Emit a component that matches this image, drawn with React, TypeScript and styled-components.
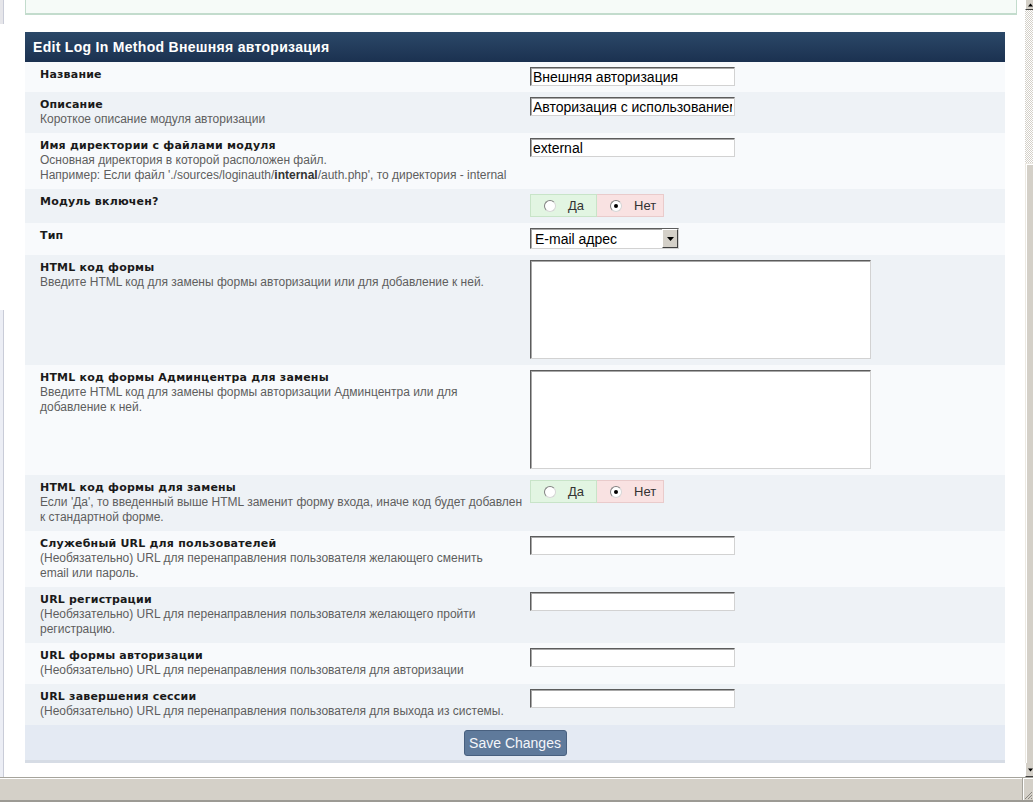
import React from 'react';
import styled, { createGlobalStyle } from 'styled-components';

const GlobalStyle = createGlobalStyle`
  html, body {
    margin: 0;
    padding: 0;
    background: #ffffff;
  }
  body {
    font-family: 'Liberation Sans', Arial, sans-serif;
    overflow: hidden;
  }
`;

const Window = styled.div`
  width: 1033px;
  height: 802px;
  display: flex;
  flex-direction: column;
  overflow: hidden;
`;

const Viewport = styled.div`
  height: 777px;
  display: flex;
`;

// left edge of the side menu that peeks in
const LeftEdge = styled.div`
  width: 4px;
  display: flex;
  flex-direction: column;
`;

const EdgePiece = styled.div<{ $h?: number; $fill?: boolean }>`
  height: ${({ $h }) => ($h ? `${$h}px` : 'auto')};
  flex: ${({ $fill }) => ($fill ? 1 : 'none')};
  background: ${({ $fill }) => ($fill ? '#eceef5' : '#e6e6ea')};
  border-right: 1px solid #c9ccd8;
`;

const EdgeGap = styled.div`
  height: 286px;
`;

const Page = styled.div`
  flex: 1;
  padding: 0 20px 0 21px;
  display: flex;
  flex-direction: column;
`;

const NoticeBox = styled.div`
  height: 13px;
  margin-right: -12px;
  background: #f6fbf8;
  border: 1px solid #c3dccd;
  border-top: none;
  border-bottom: 2px solid #c3dccd;
`;

const Panel = styled.div`
  margin-top: 17px;
  display: flex;
  flex-direction: column;
`;

const Header = styled.div`
  height: 30px;
  padding: 0 8px;
  display: flex;
  align-items: center;
  color: #ffffff;
  font-weight: bold;
  font-size: 14px;
  letter-spacing: 0.3px;
  background: linear-gradient(#2b4868, #1b3150);
`;

const Row = styled.div<{ $alt?: boolean }>`
  display: grid;
  grid-template-columns: 505px 1fr;
  padding: 5px 0 6px;
  background: ${({ $alt }) => ($alt ? '#eef2f6' : '#f8fafc')};
`;

const LabelCell = styled.div`
  padding: 1px 0 0 15px;
`;

const Title = styled.div`
  font-family: 'DejaVu Sans', Verdana, sans-serif;
  font-weight: bold;
  font-size: 11px;
  letter-spacing: 0.2px;
  line-height: 14px;
  color: #1a1a1a;
`;

const Desc = styled.div`
  font-size: 12px;
  line-height: 15px;
  color: #5e5e5e;
  white-space: nowrap;

  b {
    color: #333333;
  }
`;

const FieldCell = styled.div`
  display: flex;
  align-items: flex-start;
`;

const sunken = `
  border-style: solid;
  border-width: 1px;
  border-color: #5c5c5c #d2d2d2 #d2d2d2 #5c5c5c;
  box-shadow: inset 1px 1px 0 #a8a8a8;
`;

const TextInput = styled.input`
  box-sizing: border-box;
  width: 205px;
  height: 19px;
  padding: 0 2px;
  margin: 0;
  ${sunken}
  background: #ffffff;
  font-family: 'Liberation Sans', Arial, sans-serif;
  font-size: 14px;
  color: #000000;
  outline: none;
`;

const TextArea = styled.textarea`
  box-sizing: border-box;
  width: 341px;
  height: 99px;
  margin: 0;
  padding: 2px;
  ${sunken}
  background: #ffffff;
  resize: none;
  outline: none;
`;

const RadioGroup = styled.div`
  display: flex;
  height: 23px;
`;

const RadioCell = styled.label<{ $tone: 'yes' | 'no' }>`
  box-sizing: border-box;
  width: 67px;
  display: flex;
  align-items: center;
  gap: 12px;
  padding-left: 13px;
  font-size: 13px;
  color: #333333;
  background: ${({ $tone }) => ($tone === 'yes' ? '#e2f5e2' : '#f9e2e2')};
  border: 1px solid ${({ $tone }) => ($tone === 'yes' ? '#c8e4c8' : '#e9cbcb')};
  border-left-width: ${({ $tone }) => ($tone === 'yes' ? '1px' : '0')};
`;

const RadioMark = styled.span<{ $on?: boolean }>`
  box-sizing: border-box;
  width: 12px;
  height: 12px;
  border-radius: 50%;
  background: #ffffff;
  border: 1px solid #d6d6d6;
  border-top-color: #808080;
  border-left-color: #808080;
  display: flex;
  align-items: center;
  justify-content: center;

  &::after {
    content: '';
    width: 4px;
    height: 4px;
    border-radius: 50%;
    background: ${({ $on }) => ($on ? '#000000' : 'transparent')};
  }
`;

const SelectBox = styled.div`
  box-sizing: border-box;
  width: 149px;
  height: 21px;
  ${sunken}
  background: #ffffff;
  display: flex;
  align-items: stretch;
`;

const SelectText = styled.div`
  flex: 1;
  padding-left: 4px;
  display: flex;
  align-items: center;
  font-size: 14px;
  color: #000000;
`;

const SelectButton = styled.div`
  box-sizing: border-box;
  width: 16px;
  background: #d4d0c8;
  border: 1px solid;
  border-color: #ffffff #404040 #404040 #ffffff;
  display: flex;
  align-items: center;
  justify-content: center;
`;

const Footer = styled.div`
  height: 35px;
  background: #e4eaf3;
  border-bottom: 3px solid #d6dce5;
  display: flex;
  align-items: center;
  justify-content: center;
`;

const SaveButton = styled.button`
  width: 103px;
  height: 26px;
  padding: 0;
  background: #5f7a9b;
  border: 1px solid #48607f;
  border-radius: 3px;
  color: #f4f6fa;
  font-family: 'Liberation Sans', Arial, sans-serif;
  font-size: 14px;
`;

const Scrollbar = styled.div`
  width: 8px;
  display: flex;
  flex-direction: column;
`;

const ScrollButton = styled.div<{ $h: number }>`
  box-sizing: border-box;
  height: ${({ $h }) => $h}px;
  background: #d4d0c8;
  border-left: 1px solid #ffffff;
  border-bottom: 1px solid #404040;
  display: flex;
  align-items: center;
  justify-content: flex-start;
  padding-left: 2px;
`;

const ScrollTrack = styled.div`
  height: 153px;
  background: repeating-conic-gradient(#d4d0c8 0 25%, #ffffff 0 50%) 0 0 / 2px 2px;
`;

const ScrollThumb = styled.div`
  flex: 1;
  background: #d4d0c8;
  border-left: 1px solid #ece9e2;
  border-top: 1px solid #ece9e2;
  box-shadow: inset 1px 1px 0 #ffffff;
`;

const StatusBar = styled.div`
  height: 25px;
  box-sizing: border-box;
  border-top: 1px solid #a6a49c;
  border-bottom: 2px solid #9c9a94;
  box-shadow: inset 0 1px 0 #ffffff;
  background: #d4d0c8;
  display: flex;
`;

const StatusPane = styled.div`
  flex: 1;
  border-right: 1px solid #a6a49c;
  box-shadow: 1px 0 0 #ffffff;
`;

const Grip = styled.div`
  width: 10px;
  display: flex;
  align-items: flex-end;
`;

const Arrow: React.FC<{ up?: boolean }> = ({ up }) => (
  <svg width="7" height="4" viewBox="0 0 7 4">
    <path d={up ? 'M0 4 L3.5 0 L7 4 Z' : 'M0 0 L7 0 L3.5 4 Z'} fill="#000" />
  </svg>
);

type RowData = {
  title: string;
  desc?: React.ReactNode[];
  field: React.ReactNode;
};

const YesNo: React.FC<{ value: boolean }> = ({ value }) => (
  <RadioGroup>
    <RadioCell $tone="yes">
      <RadioMark $on={value} />
      Да
    </RadioCell>
    <RadioCell $tone="no">
      <RadioMark $on={!value} />
      Нет
    </RadioCell>
  </RadioGroup>
);

const rows: RowData[] = [
  { title: 'Название', field: <TextInput defaultValue="Внешняя авторизация" /> },
  {
    title: 'Описание',
    desc: ['Короткое описание модуля авторизации'],
    field: <TextInput defaultValue="Авторизация с использованием внешней базы" />,
  },
  {
    title: 'Имя директории с файлами модуля',
    desc: [
      'Основная директория в которой расположен файл.',
      <>
        Например: Если файл './sources/loginauth/<b>internal</b>/auth.php', то директория - internal
      </>,
    ],
    field: <TextInput defaultValue="external" />,
  },
  { title: 'Модуль включен?', field: <YesNo value={false} /> },
  {
    title: 'Тип',
    field: (
      <SelectBox>
        <SelectText>E-mail адрес</SelectText>
        <SelectButton>
          <Arrow />
        </SelectButton>
      </SelectBox>
    ),
  },
  {
    title: 'HTML код формы',
    desc: ['Введите HTML код для замены формы авторизации или для добавление к ней.'],
    field: <TextArea />,
  },
  {
    title: 'HTML код формы Админцентра для замены',
    desc: [
      'Введите HTML код для замены формы авторизации Админцентра или для',
      'добавление к ней.',
    ],
    field: <TextArea />,
  },
  {
    title: 'HTML код формы для замены',
    desc: [
      "Если 'Да', то введенный выше HTML заменит форму входа, иначе код будет добавлен",
      'к стандартной форме.',
    ],
    field: <YesNo value={false} />,
  },
  {
    title: 'Служебный URL для пользователей',
    desc: [
      '(Необязательно) URL для перенаправления пользователя желающего сменить',
      'email или пароль.',
    ],
    field: <TextInput />,
  },
  {
    title: 'URL регистрации',
    desc: [
      '(Необязательно) URL для перенаправления пользователя желающего пройти',
      'регистрацию.',
    ],
    field: <TextInput />,
  },
  {
    title: 'URL формы авторизации',
    desc: ['(Необязательно) URL для перенаправления пользователя для авторизации'],
    field: <TextInput />,
  },
  {
    title: 'URL завершения сессии',
    desc: ['(Необязательно) URL для перенаправления пользователя для выхода из системы.'],
    field: <TextInput />,
  },
];

export default function App() {
  return (
    <>
      <GlobalStyle />
      <Window>
        <Viewport>
          <LeftEdge>
            <EdgePiece $h={24} />
            <EdgeGap />
            <EdgePiece $fill />
          </LeftEdge>
          <Page>
            <NoticeBox />
            <Panel>
              <Header>Edit Log In Method Внешняя авторизация</Header>
              {rows.map((row, i) => (
                <Row key={row.title} $alt={i % 2 === 1}>
                  <LabelCell>
                    <Title>{row.title}</Title>
                    {row.desc?.map((line, j) => (
                      <Desc key={j}>{line}</Desc>
                    ))}
                  </LabelCell>
                  <FieldCell>{row.field}</FieldCell>
                </Row>
              ))}
              <Footer>
                <SaveButton>Save Changes</SaveButton>
              </Footer>
            </Panel>
          </Page>
          <Scrollbar>
            <ScrollButton $h={10}>
              <Arrow up />
            </ScrollButton>
            <ScrollTrack />
            <ScrollThumb />
            <ScrollButton $h={14}>
              <Arrow />
            </ScrollButton>
          </Scrollbar>
        </Viewport>
        <StatusBar>
          <StatusPane />
          <Grip>
            <svg width="10" height="10" viewBox="0 0 10 10">
              <path d="M9 2 L2 9 M9 5 L5 9 M9 8 L8 9" stroke="#8a8780" strokeWidth="1" />
            </svg>
          </Grip>
        </StatusBar>
      </Window>
    </>
  );
}
